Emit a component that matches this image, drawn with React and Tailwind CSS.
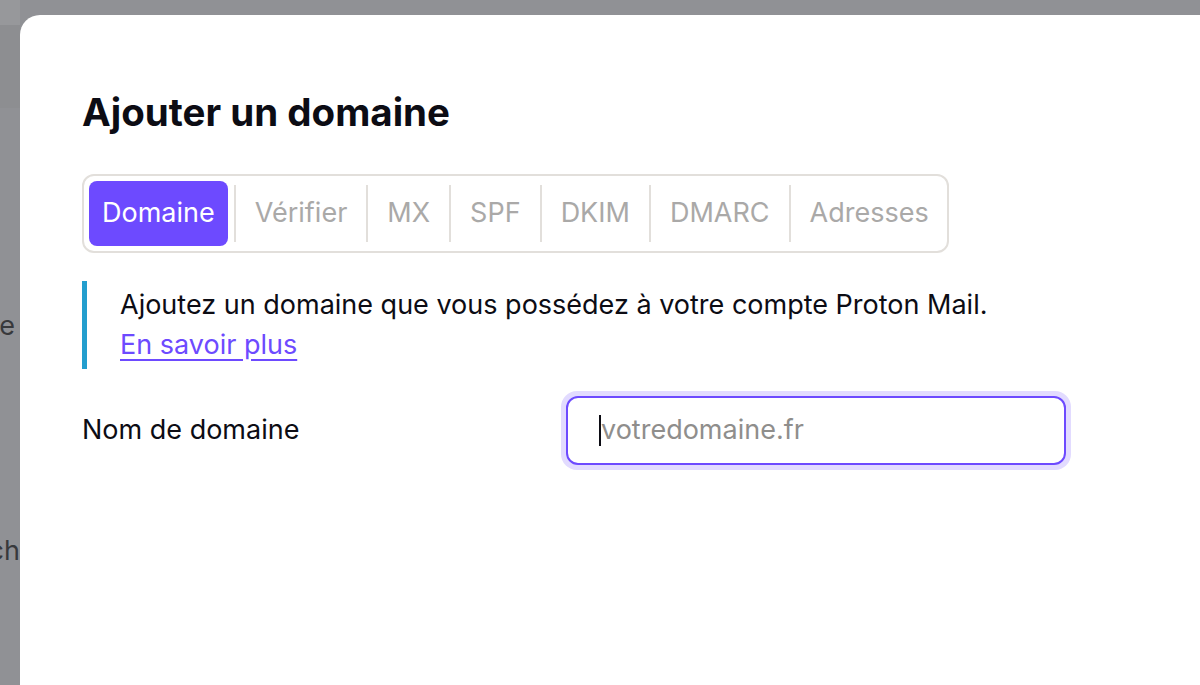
import React from "react";

const tabs = ["Domaine", "Vérifier", "MX", "SPF", "DKIM", "DMARC", "Adresses"];

function App() {
  return (
    <div
      className="w-[1200px] h-[685px] overflow-hidden bg-[#909195] flex"
      style={{ fontFamily: "Inter, 'Noto Sans', sans-serif" }}
    >
      {/* background app behind the overlay */}
      <div className="w-[20px] shrink-0 flex flex-col overflow-hidden">
        <div className="h-[25px] bg-[#97989b]" />
        <div className="h-[83px] bg-[#8d8e91]" />
        <div className="flex justify-end pr-[5px] mt-[200px] text-[27px] leading-[36px] text-[#38393c] whitespace-nowrap">
          <span>Adresse</span>
        </div>
        <div className="flex justify-end pr-0 mt-[189px] text-[27px] leading-[36px] text-[#38393c] whitespace-nowrap">
          <span>Switch</span>
        </div>
      </div>

      <div className="flex-1 pt-[15px]">
        <div className="h-full w-[1300px] bg-white rounded-tl-[20px] pl-[62px] pt-[74px]">
          <h1 className="text-[38.5px] leading-[46px] font-bold text-[#0c0c14]">
            Ajouter un domaine
          </h1>

          <div className="mt-[39px] inline-flex items-center p-[5px] border-2 border-[#e2dfdb] rounded-[12px] h-[79px]">
            {tabs.map((t, i) => (
              <React.Fragment key={t}>
                {i > 0 && <div className="w-[2px] h-[57px] bg-[#e2dfdb] mx-[6px]" />}
                <div
                  className={
                    i === 0
                      ? "h-[65px] px-[13px] flex items-center rounded-[8px] bg-[#6d4aff] text-white text-[27px]"
                      : "h-[65px] px-[13px] flex items-center text-[27px] text-[#aaa9a8]"
                  }
                >
                  {t}
                </div>
              </React.Fragment>
            ))}
          </div>

          <div className="mt-[28px] border-l-[5px] border-[#239ece] pl-[33px] py-[4px] text-[27px] leading-[40px] text-[#0c0c14]">
            <p>Ajoutez un domaine que vous possédez à votre compte Proton Mail.</p>
            <a href="#" className="text-[#6d4aff] underline underline-offset-[5px]">
              En savoir plus
            </a>
          </div>

          <div className="mt-[22px] flex items-center">
            <label className="w-[479px] text-[27px] text-[#0c0c14]">Nom de domaine</label>
            <div className="w-[510px] h-[79px] rounded-[16px] bg-[#e2dbff] p-[5px]">
              <div className="h-full rounded-[12px] border-2 border-[#6d4aff] bg-white flex items-center pl-[31px]">
                <span className="w-[2px] h-[31px] bg-[#0c0c14]" />
                <span className="text-[27px] text-[#8f8e8c]">votredomaine.fr</span>
              </div>
            </div>
          </div>
        </div>
      </div>
    </div>
  );
}

export default App;
